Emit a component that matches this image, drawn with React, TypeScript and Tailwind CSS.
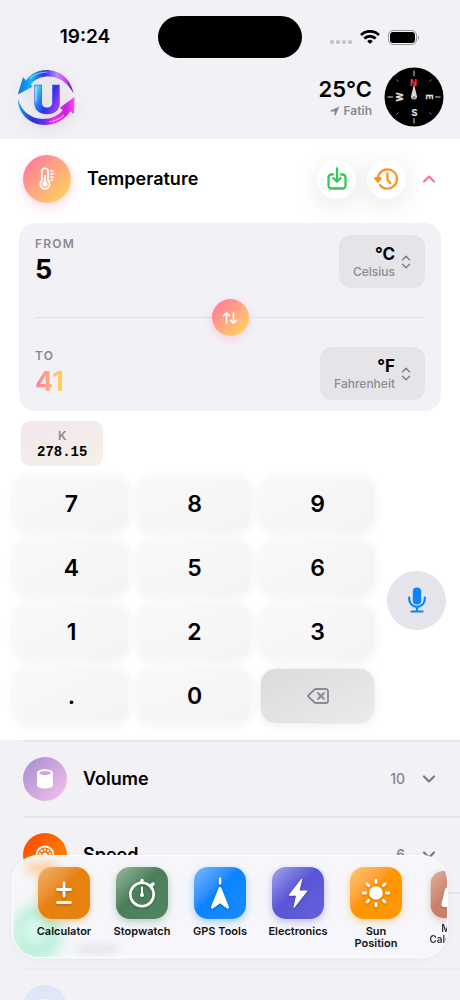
import { useState, type ReactNode } from 'react'
import { ChevronDown, ChevronUp, Delete } from 'lucide-react'

const KEYS = ['7', '8', '9', '4', '5', '6', '1', '2', '3', '.', '0']

function Logo() {
    return (
        <svg viewBox="0 0 60 60" className="size-[60px] drop-shadow-[0_4px_8px_rgba(0,0,0,0.10)]" role="img" aria-label="Unit converter">
            <defs>
                <linearGradient id="arcTop" x1="0" y1="0.6" x2="1" y2="0.6">
                    <stop offset="0" stopColor="#0a6fe0" />
                    <stop offset="0.25" stopColor="#19b4f5" />
                    <stop offset="0.48" stopColor="#3b2be0" />
                    <stop offset="0.7" stopColor="#b78af8" />
                    <stop offset="0.85" stopColor="#e040f0" />
                    <stop offset="1" stopColor="#3a1a90" />
                </linearGradient>
                <linearGradient id="arcBottom" x1="0" y1="0" x2="1" y2="0">
                    <stop offset="0" stopColor="#12a8f4" />
                    <stop offset="0.25" stopColor="#2a2fd8" />
                    <stop offset="0.45" stopColor="#5a30f0" />
                    <stop offset="0.65" stopColor="#f02cf0" />
                    <stop offset="0.85" stopColor="#c81fe0" />
                    <stop offset="1" stopColor="#ff4af2" />
                </linearGradient>
                <linearGradient id="letter" x1="0" y1="0" x2="1" y2="0.8">
                    <stop offset="0" stopColor="#2aa2f6" />
                    <stop offset="0.22" stopColor="#5ad4fc" />
                    <stop offset="0.42" stopColor="#1f7cf2" />
                    <stop offset="0.6" stopColor="#2a2ff0" />
                    <stop offset="0.78" stopColor="#8a35f4" />
                    <stop offset="1" stopColor="#f436f4" />
                </linearGradient>
            </defs>
            <path d="M1.800 27.500 7 10l3 3.500C15 6.500 22 3 30.500 3 44 3 55 12 57.500 26.500 52 16 43 9.500 32 9.500c-7 0-12.500 2.500-17 7.500l1.500 2.800Z" fill="url(#arcTop)" />
            <path d="M2 32c3 11 12 20 25 20 8 0 14.500-3 19.500-8.500L44 40.500 58.500 30 58 47l-3.500-2.500C48 53 39 58 29 58 14 58 2 47 2 32Z" fill="url(#arcBottom)" />
            <path d="M14 11.500C19 7 25 5 31 5" fill="none" stroke="#8be6ff" strokeWidth="1.200" opacity="0.8" />
            <path d="M33 55c6-.7 11-3 15-7" fill="none" stroke="#ffb0ff" strokeWidth="1.200" opacity="0.8" />
            <text x="31" y="46.500" textAnchor="middle" fontSize="40" fontWeight="800" fill="url(#letter)" stroke="#2a4ae0" strokeWidth="0.5">U</text>
            <path d="M20 20v14" stroke="#c8f4ff" strokeWidth="1.200" opacity="0.7" strokeLinecap="round" />
        </svg>
    )
}

function Compass() {
    return (
        <svg viewBox="0 0 60 60" className="size-[60px]" role="img" aria-label="Compass">
            <circle cx="30" cy="30" r="29.500" fill="#000" />
            <g stroke="#d8d8d8" strokeWidth="1">
                <path d="M30 3.500v5.500M30 51v5.500M3.500 30H9M51 30h5.500" />
                <path d="m12.500 12.500 2 2M45.500 14.500l2-2M12.500 47.500l2-2M45.500 45.500l2 2" opacity="0.6" />
            </g>
            <path d="m30 17 3 12.500a3 3 0 0 1-6 0Z" fill="#d9d9d9" />
            <circle cx="30" cy="30.500" r="1.500" fill="#888" />
            <g fontSize="9" fontWeight="800" textAnchor="middle" fill="#e4e4e4">
                <text x="29.500" y="19" fill="#ff3038">N</text>
                <text x="30.500" y="48.500">S</text>
                <text transform="translate(42 30) rotate(90)">E</text>
                <text transform="translate(18.500 30) rotate(-90)">W</text>
            </g>
        </svg>
    )
}

function StatusBar() {
    return (
        <div className="grid grid-cols-[1fr_144px_1fr] items-center">
            <time className="pl-3 text-center text-[19px] leading-6 font-semibold">19:24</time>
            <div className="h-[42px] rounded-full bg-black" />
            <div className="flex items-center justify-end gap-2 pr-10">
                <svg viewBox="0 0 24 14" className="h-[14px] w-6" fill="#c4c3c8">
                    {[2, 8, 14, 20].map(x => <rect key={x} x={x} y="10" width="4" height="4" rx="1.500" />)}
                </svg>
                <svg viewBox="0 0 20 14" className="h-[14px] w-5" fill="none" stroke="#000" strokeWidth="2.800">
                    <path d="M1 4.900a13 13 0 0 1 18 0M4.300 8.500a8.300 8.300 0 0 1 11.400 0" />
                    <path d="M10 14 7.200 11.200a4 4 0 0 1 5.600 0Z" fill="#000" stroke="none" />
                </svg>
                <svg viewBox="0 0 32 15" className="h-[15px] w-8">
                    <rect x="0.500" y="0.500" width="28" height="14" rx="4.500" fill="none" stroke="#99989d" />
                    <rect x="2" y="2" width="25" height="11" rx="3.200" fill="#000" />
                    <path d="M30 5.500c1.500.4 1.500 3.600 0 4Z" fill="#99989d" />
                </svg>
            </div>
        </div>
    )
}

function UnitButton({ symbol, name }: { symbol: string; name: string }) {
    return (
        <button type="button" aria-haspopup="listbox" className="flex h-[53px] items-center gap-1.5 rounded-xl bg-[#e5e4e9] pr-3.5 pl-3.5">
            <span className="flex flex-col items-end">
                <span className="text-[17px] leading-5 font-bold">{symbol}</span>
                <span className="text-[12px] leading-4 font-medium text-[#8d8c92]">{name}</span>
            </span>
            <svg viewBox="0 0 10 14" className="h-[14px] w-2.5" fill="none" stroke="#828187" strokeWidth="1.500" strokeLinecap="round" strokeLinejoin="round">
                <path d="m1.500 4.800 3.500-3.500 3.500 3.500M1.500 9.200 5 12.700l3.500-3.500" />
            </svg>
        </button>
    )
}

function CategoryRow({ name, count, color, icon }: { name?: string; count?: number; color: string; icon?: ReactNode }) {
    return (
        <li className="ml-[23px] border-t-2 border-[#e6e5ea]">
            <button type="button" className="flex h-[74px] w-full items-center pr-[21px] text-left">
                <span className={`flex size-11 items-center justify-center rounded-full bg-linear-to-br ${color}`}>{icon}</span>
                {name && <span className="ml-4 text-[18px] leading-6 font-semibold">{name}</span>}
                {count && <span className="ml-auto text-[14px] leading-5 font-medium text-[#85848a]">{count}</span>}
                {count && <ChevronDown className="ml-3.5 size-5 text-[#7b7a80]" strokeWidth={2.6} />}
            </button>
        </li>
    )
}

function Tool({ label, color, icon }: { label: ReactNode; color: string; icon: ReactNode }) {
    return (
        <button type="button" className="flex w-[78px] shrink-0 flex-col items-center">
            <span className={`flex size-[52px] items-center justify-center rounded-[14px] bg-linear-to-br ${color}`}>{icon}</span>
            <span className="mt-1.5 text-[11px] leading-3 font-semibold text-[#111]">{label}</span>
        </button>
    )
}

const toolIcon = 'size-8 drop-shadow-[0_1px_1px_rgba(0,0,0,0.25)]'

export default function App() {
    const [value, setValue] = useState('5')
    const [swapped, setSwapped] = useState(false)

    const input = Number(value) || 0
    const celsius = swapped ? ((input - 32) * 5) / 9 : input
    const result = swapped ? celsius : (input * 9) / 5 + 32
    const from = swapped ? { symbol: '°F', name: 'Fahrenheit' } : { symbol: '°C', name: 'Celsius' }
    const to = swapped ? { symbol: '°C', name: 'Celsius' } : { symbol: '°F', name: 'Fahrenheit' }

    function press(key: string) {
        if (key === '.' && value.includes('.')) return
        setValue(value === '0' && key !== '.' ? key : value + key)
    }

    return (
        <div className="relative h-screen overflow-hidden bg-[#f2f1f6] font-['Inter',sans-serif] text-black">
            <header className="pt-4">
                <StatusBar />
                <div className="flex items-center justify-between px-4 pt-[9px] pb-3">
                    <Logo />
                    <div className="flex items-center gap-3">
                        <div className="flex flex-col items-end">
                            <span className="text-[22px] leading-7 font-semibold">25°C</span>
                            <span className="flex items-center gap-1 text-[12px] leading-4 font-semibold text-[#8a898f]">
                                <svg viewBox="0 0 10 10" className="size-2.5" fill="currentColor">
                                    <path d="M9.600.4.500 4.600c-.5.300-.3.900.2.900h3.800v3.800c0 .5.700.7.900.2Z" />
                                </svg>
                                Fatih
                            </span>
                        </div>
                        <Compass />
                    </div>
                </div>
            </header>

            <main>
                <section className="bg-white pt-4 pb-4">
                    <div className="flex items-center pr-[21px] pl-[23px]">
                        <span className="flex size-12 items-center justify-center rounded-full bg-linear-to-br from-[#fd6c9e] to-[#fedb48] shadow-[0_4px_12px_rgba(255,110,150,0.28)]">
                            <svg viewBox="0 0 18 24" className="h-6 w-[18px]" fill="none" stroke="#fff" strokeWidth="1.800" strokeLinecap="round">
                                <path d="M4 13.500V4.300a3 3 0 0 1 6 0v9.200a4.700 4.700 0 1 1-6 0Z" />
                                <circle cx="7" cy="17" r="2.600" fill="#fff" stroke="none" />
                                <path d="M7 9v7" strokeWidth="2" />
                                <path d="M12.800 4h2.400M12.800 7h2.400M12.800 10h2.400M12.800 13h1.600" strokeWidth="1.500" />
                            </svg>
                        </span>
                        <h1 className="ml-4 text-[18px] leading-6 font-semibold">Temperature</h1>
                        <div className="ml-auto flex items-center gap-[11px]">
                            <button type="button" aria-label="Save" className="flex size-[39px] items-center justify-center rounded-full bg-white shadow-[0_5px_28px_rgba(0,0,0,0.10)]">
                                <svg viewBox="0 0 24 26" className="h-[26px] w-6" fill="none" stroke="#34c759" strokeWidth="2.300" strokeLinecap="round" strokeLinejoin="round">
                                    <path d="M8 8.500H6.500a3 3 0 0 0-3 3v8a3 3 0 0 0 3 3h11a3 3 0 0 0 3-3v-8a3 3 0 0 0-3-3H16M12 2.500v13M8.300 12l3.700 3.700 3.700-3.700" />
                                </svg>
                            </button>
                            <button type="button" aria-label="History" className="flex size-[39px] items-center justify-center rounded-full bg-white shadow-[0_5px_28px_rgba(0,0,0,0.10)]">
                                <svg viewBox="0 0 26 24" className="h-6 w-[26px]" fill="none" stroke="#ff8f1f" strokeWidth="2.200" strokeLinecap="round" strokeLinejoin="round">
                                    <path d="M3.800 12a9.600 9.600 0 1 1 2.300 6.200" />
                                    <path d="M1.200 11.200h5.300l-2.600 3.500Z" fill="#ff8f1f" />
                                    <path d="M13.400 6.500v6l3 3.700" />
                                </svg>
                            </button>
                        </div>
                        <button type="button" aria-label="Collapse" className="ml-[13px]">
                            <ChevronUp className="size-5 text-[#fb6d9e]" strokeWidth={2.5} />
                        </button>
                    </div>

                    <div className="relative mx-[19px] mt-5 rounded-2xl bg-[#f2f1f6] px-4 pt-3 pb-[11px]">
                        <div className="flex items-start justify-between">
                            <div>
                                <p className="text-[12px] leading-[18px] font-semibold tracking-widest text-[#8a898f]">FROM</p>
                                <output className="block text-[27px] leading-[34px] font-bold">{value || '0'}</output>
                            </div>
                            <UnitButton symbol={from.symbol} name={from.name} />
                        </div>
                        <div className="my-[11px] flex items-center">
                            <span className="h-px flex-1 bg-[#e1e0e5]" />
                            <button type="button" aria-label="Swap units" onClick={() => setSwapped(!swapped)} className="flex size-[37px] items-center justify-center rounded-full bg-linear-to-br from-[#fd6c9e] to-[#fedb48] shadow-[0_3px_8px_rgba(255,110,150,0.25)]">
                                <svg viewBox="0 0 18 14" className="h-[14px] w-[18px]" fill="none" stroke="#fff" strokeWidth="1.600" strokeLinecap="round" strokeLinejoin="round">
                                    <path d="M5.500 12V2M2.500 4.800 5.500 1.800l3 3M12.500 2v10M9.500 9.200l3 3 3-3" />
                                </svg>
                            </button>
                            <span className="h-px flex-1 bg-[#e1e0e5]" />
                        </div>
                        <div className="flex items-start justify-between">
                            <div>
                                <p className="text-[12px] leading-[18px] font-semibold tracking-widest text-[#8a898f]">TO</p>
                                <output className="block w-fit bg-linear-to-r from-[#fd7799] to-[#fedb48] bg-clip-text text-[27px] leading-[34px] font-bold text-transparent">
                                    {Number(result.toFixed(4))}
                                </output>
                            </div>
                            <UnitButton symbol={to.symbol} name={to.name} />
                        </div>
                    </div>

                    <div className="mt-2.5 ml-[21px] flex h-[45px] w-fit min-w-[82px] flex-col items-center justify-center rounded-[9px] bg-linear-to-br from-[#f4e7ef] to-[#f3f0e6] px-4">
                        <span className="text-[12px] leading-4 font-semibold text-[#8a898f]">K</span>
                        <span className="font-['Liberation_Mono',monospace] text-[14px] leading-4 font-bold">{(celsius + 273.15).toFixed(2)}</span>
                    </div>

                    <div className="mt-2.5 flex items-center gap-3 px-[14px]">
                        <div className="grid flex-1 grid-cols-3 gap-2">
                            {KEYS.map(key => (
                                <button key={key} type="button" onClick={() => press(key)} className="h-14 rounded-2xl border border-[#fbfbfb] bg-linear-to-br from-[#f9f9f9] to-[#f4f4f4] text-[23px] leading-7 font-semibold shadow-[0_1px_8px_rgba(0,0,0,0.07)]">
                                    {key}
                                </button>
                            ))}
                            <button type="button" aria-label="Delete" onClick={() => setValue(value.slice(0, -1))} className="flex h-14 items-center justify-center rounded-2xl border border-[#f0f0f2] bg-linear-to-br from-[#dbdbdd] to-[#ebebed] text-[#8b8a90] shadow-[0_1px_8px_rgba(0,0,0,0.07)]">
                                <Delete className="size-6" strokeWidth={1.8} />
                            </button>
                        </div>
                        <button type="button" aria-label="Voice input" className="flex size-[59px] items-center justify-center rounded-full bg-[#e5e4ea]">
                            <svg viewBox="0 0 18 26" className="h-[26px] w-[18px]" fill="none" stroke="#0a84ff" strokeWidth="2.200" strokeLinecap="round">
                                <rect x="4.800" y="0.500" width="8.400" height="17" rx="4" fill="#0a84ff" stroke="none" />
                                <path d="M1.200 10.500V12a7.800 7.800 0 0 0 15.600 0v-1.500M9 20.500v3.800M3.500 24.500h11" />
                            </svg>
                        </button>
                    </div>
                </section>

                <ul>
                    <CategoryRow
                        name="Volume"
                        count={10}
                        color="from-[#a18cd1] to-[#fbc2eb]"
                        icon={
                            <svg viewBox="0 0 16 20" className="h-5 w-4">
                                <path d="M0 4c0-5 16-5 16 0v12c0 4.800-16 4.800-16 0Z" fill="#fff" />
                                <ellipse cx="8" cy="4" rx="5.800" ry="2" fill="#cfa7de" />
                            </svg>
                        }
                    />
                    <CategoryRow
                        name="Speed"
                        count={6}
                        color="from-[#ff3c00] to-[#ff9500]"
                        icon={
                            <svg viewBox="0 0 20 20" className="size-5" fill="none" stroke="#fff">
                                <circle cx="10" cy="10" r="8.500" strokeWidth="1.800" />
                                <circle cx="10" cy="10" r="5.200" strokeWidth="2.500" strokeDasharray="1.800 1.470" />
                                <circle cx="10" cy="10" r="2" fill="#fff" />
                            </svg>
                        }
                    />
                    <CategoryRow color="from-[#43e9a0] to-[#38f9c0]" />
                    <CategoryRow
                        color="from-[#b9cdfb] to-[#c6d6ff]"
                        icon={<svg viewBox="0 0 20 20" className="size-5"><circle cx="10" cy="10" r="8" fill="#fff" /></svg>}
                    />
                </ul>
            </main>

            <div className="pointer-events-none absolute inset-x-0 bottom-0 h-16 bg-linear-to-b from-[#f2f1f6]/30 to-[#f2f1f6]/70" />

            <nav aria-label="Tools" className="absolute inset-x-3 bottom-[42px] h-[103px] overflow-hidden rounded-[26px] border border-white bg-[#f7f7fb] shadow-[0_2px_10px_rgba(0,0,0,0.03)]">
                <span className="absolute top-1.5 left-3 h-3 w-8 rounded-full bg-[#ffd2a3] blur-[5px]" />
                <span className="absolute -bottom-1 left-0 h-14 w-12 rounded-3xl bg-[#b5f0d8] blur-[7px]" />
                <span className="absolute bottom-3 left-2 h-7 w-7 rounded-full bg-[#d8f6ea] blur-[5px]" />
                <span className="absolute bottom-1 left-16 h-2 w-10 rounded-full bg-[#e2e2e6] blur-[4px]" />
                <div className="relative flex pt-[11px] pl-3">
                    <Tool
                        label="Calculator"
                        color="from-[#f0b468] via-[#e8820f] via-45% to-[#e8820f] shadow-[0_3px_8px_rgba(232,130,15,0.35)]"
                        icon={
                            <svg viewBox="0 0 32 32" className={toolIcon} stroke="#fff" strokeWidth="2.800" strokeLinecap="round">
                                <path d="M9.500 12.500h13M16 6v13M9.500 25.500h13" />
                            </svg>
                        }
                    />
                    <Tool
                        label="Stopwatch"
                        color="from-[#9bb8a2] via-[#4a7f5a] via-45% to-[#4f8660] shadow-[0_3px_8px_rgba(74,127,90,0.35)]"
                        icon={
                            <svg viewBox="0 0 32 32" className={toolIcon} fill="none" stroke="#fff" strokeWidth="2.600" strokeLinecap="round">
                                <circle cx="16" cy="17.500" r="11.700" />
                                <path d="M16 5.500V3.500M25.500 8.500l1.500-1.500" strokeWidth="3.400" />
                                <path d="M16 10.500V17" strokeWidth="2" />
                                <circle cx="16" cy="18" r="2" fill="#fff" strokeWidth="0" />
                            </svg>
                        }
                    />
                    <Tool
                        label="GPS Tools"
                        color="from-[#77b9ff] via-[#0a84ff] via-45% to-[#1a8aff] shadow-[0_3px_8px_rgba(10,132,255,0.35)]"
                        icon={
                            <svg viewBox="0 0 32 32" className={toolIcon} fill="#fff">
                                <rect x="14.900" y="0.500" width="2.400" height="7" rx="1" />
                                <path d="M16 10c.8 0 1.200.6 1.600 1.500l7.200 18c.6 1.700-.7 2.800-2.200 1.700L16 26.300l-6.600 4.900c-1.500 1.100-2.800 0-2.200-1.700l7.200-18c.4-.9.800-1.500 1.600-1.500Z" />
                            </svg>
                        }
                    />
                    <Tool
                        label="Electronics"
                        color="from-[#a7a4ea] via-[#5856d6] via-45% to-[#6462d8] shadow-[0_3px_8px_rgba(88,86,214,0.35)]"
                        icon={
                            <svg viewBox="0 0 32 32" className={toolIcon} fill="#fff" stroke="#fff" strokeLinejoin="round">
                                <path d="M19.800 2 7 18.200h7.600L12 30.500 25 14h-8Z" />
                            </svg>
                        }
                    />
                    <Tool
                        label={<>Sun<br />Position</>}
                        color="from-[#ffc877] via-[#ff9500] via-45% to-[#ff9806] shadow-[0_3px_8px_rgba(255,149,0,0.35)]"
                        icon={
                            <svg viewBox="0 0 32 32" className={toolIcon} fill="#fff" stroke="#fff" strokeWidth="2.800" strokeLinecap="round">
                                <circle cx="16" cy="16" r="6.800" stroke="none" />
                                <path d="M16 3.200v2.400M16 26.400v2.400M3.200 16h2.400M26.400 16h2.400M7 7l1.700 1.700M23.300 23.300 25 25M7 25l1.700-1.700M23.300 8.700 25 7" />
                            </svg>
                        }
                    />
                    <div className="scale-90 opacity-85">
                        <Tool
                            label={<>Mass<br />Calculator</>}
                            color="from-[#dba28f] via-[#bf6b4f] via-45% to-[#bf6b4f] shadow-[0_3px_8px_rgba(191,107,79,0.35)]"
                            icon={
                                <svg viewBox="0 0 32 32" className={toolIcon} fill="#fff">
                                    <path d="M9 8h14a3 3 0 0 1 3 2.200l4 16A3 3 0 0 1 27 30H5a3 3 0 0 1-3-3.800l4-16A3 3 0 0 1 9 8Z" />
                                </svg>
                            }
                        />
                    </div>
                </div>
            </nav>
        </div>
    )
}
